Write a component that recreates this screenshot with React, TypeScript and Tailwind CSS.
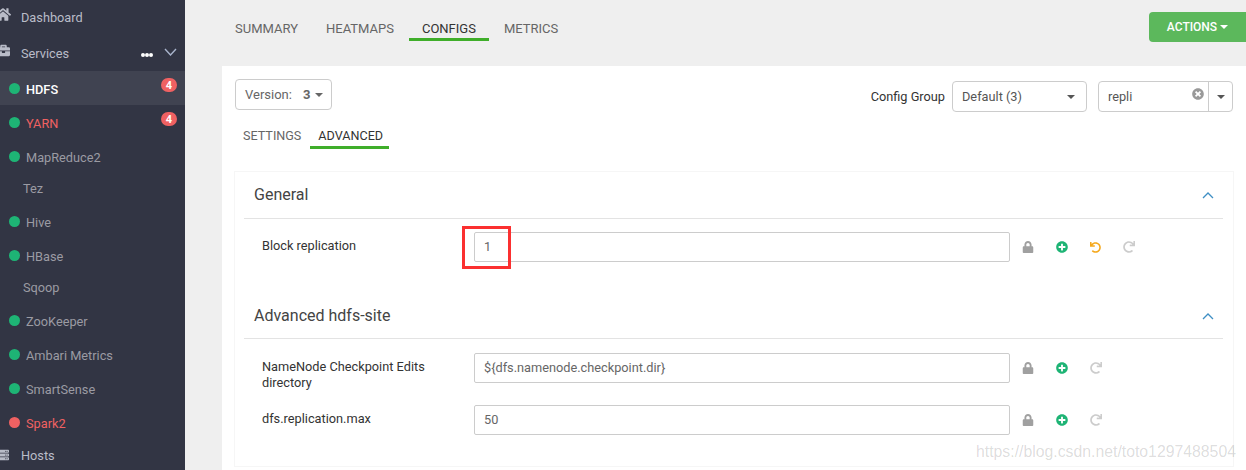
import { FaBriefcase, FaHome, FaLock, FaPlusCircle, FaRedo, FaServer, FaTimesCircle, FaUndo } from 'react-icons/fa';

interface Service {
    name: string;
    dot?: 'green' | 'red';
    tone?: 'active' | 'alert';
    badge?: number;
}

const services: Service[] = [
    { name: 'HDFS', dot: 'green', tone: 'active', badge: 4 },
    { name: 'YARN', dot: 'green', tone: 'alert', badge: 4 },
    { name: 'MapReduce2', dot: 'green' },
    { name: 'Tez' },
    { name: 'Hive', dot: 'green' },
    { name: 'HBase', dot: 'green' },
    { name: 'Sqoop' },
    { name: 'ZooKeeper', dot: 'green' },
    { name: 'Ambari Metrics', dot: 'green' },
    { name: 'SmartSense', dot: 'green' },
    { name: 'Spark2', dot: 'red', tone: 'alert' },
];

const Caret = ({ className }: { className: string }) => (
    <span className={`inline-block w-0 h-0 border-x-[4px] border-x-transparent border-t-[4px] ${className}`} />
);

const Chevron = ({ className }: { className?: string }) => (
    <svg className={className} width="12" height="7" viewBox="0 0 12 7" fill="none" stroke="#3f8fc4" strokeWidth="1.3">
        <path d="M1 6l5-5 5 5" />
    </svg>
);

const ServiceRow = ({ service }: { service: Service }) => {
    const color = service.tone === 'active' ? 'text-white font-medium' : service.tone === 'alert' ? 'text-[#ef6162]' : 'text-[#9b9ba3]';
    return (
        <div className={`relative flex items-center ${service.dot ? 'h-[34px] pl-[9px]' : 'h-[31px] pl-[23px]'} ${service.tone === 'active' ? 'bg-[#404351]' : ''}`}>
            {service.dot && (
                <span className={`w-[11px] h-[11px] rounded-full mr-[6px] ${service.dot === 'green' ? 'bg-[#1eb475]' : 'bg-[#ef6162]'}`} />
            )}
            <span className={`text-[12.75px] ${service.dot ? 'mt-[4px]' : ''} ${color}`}>{service.name}</span>
            {service.badge && (
                <span className="absolute left-[161px] top-[7px] w-[16px] h-[14px] rounded-full bg-[#ef6162] text-white text-[11px] font-bold leading-[15px] text-center">
                    {service.badge}
                </span>
            )}
        </div>
    );
};

const Sidebar = () => (
    <aside className="w-[185px] shrink-0 bg-[#323544] flex flex-col">
        <div className="h-[35px] flex items-center text-[#b9bcc8]">
            <FaHome className="w-[16px] h-[15px] -ml-[5px] -mt-[6px] shrink-0" />
            <span className="text-[12.75px] ml-[10px]">Dashboard</span>
        </div>
        <div className="h-[36px] flex items-center text-[#b9bcc8]">
            <FaBriefcase className="w-[15px] h-[13px] -ml-[4px] -mt-[5px] shrink-0" />
            <span className="text-[12.75px] ml-[10px] mt-[1px]">Services</span>
            <span className="flex ml-[72px] mt-[4px]">
                <span className="w-[4px] h-[4px] rounded-full bg-white" />
                <span className="w-[4px] h-[4px] rounded-full bg-white" />
                <span className="w-[4px] h-[4px] rounded-full bg-white" />
            </span>
            <svg className="ml-[11px] -mt-[3px]" width="13" height="8" viewBox="0 0 13 8" fill="none" stroke="#a9b4cc" strokeWidth="1.4">
                <path d="M1 1l5.5 6L12 1" />
            </svg>
        </div>
        {services.map((service) => (
            <ServiceRow key={service.name} service={service} />
        ))}
        <div className="h-[30px] flex items-center text-[#b9bcc8]">
            <FaServer className="w-[14px] h-[12px] -ml-[4px] mt-[1px] shrink-0" />
            <span className="text-[12.75px] ml-[11px] mt-[4px]">Hosts</span>
        </div>
    </aside>
);

const ConfigRow = ({ label, value, undo }: { label: string; value: string; undo?: boolean }) => (
    <div className="flex items-center h-[30px]">
        <div className="w-[239px] self-start pt-[6px] pl-[27px] pr-[40px] text-[12.75px] leading-[16px] text-[#333]">{label}</div>
        <div className="w-[536px] h-[30px] border border-[#ccc] rounded-[2px] pl-[9px] flex items-center text-[12.75px] text-[#666]">{value}</div>
        <FaLock className="w-[12px] h-[12px] ml-[12px] -mt-[1px] text-[#a0a0a0]" />
        <FaPlusCircle className="w-[12px] h-[12px] ml-[22px] text-[#1eb475]" />
        {undo && <FaUndo className="w-[11px] h-[11px] ml-[22px] text-[#f5a81c]" />}
        <FaRedo className="w-[12px] h-[12px] ml-[22px] text-[#ccc]" />
    </div>
);

const SectionHeader = ({ title, titleClass, chevronClass }: { title: string; titleClass?: string; chevronClass?: string }) => (
    <div className="h-[47px] ml-[9px] mr-[10px] pl-[10px] pr-[9px] border-b border-[#e3e3e3] flex items-center justify-between">
        <h2 className={`text-[16px] text-[#444] ${titleClass ?? ''}`}>{title}</h2>
        <Chevron className={chevronClass} />
    </div>
);

const App = () => (
    <div className="relative w-[1246px] h-[470px] overflow-hidden flex bg-[#efefef] font-['Roboto',sans-serif]">
        <Sidebar />
        <main className="flex-1 min-w-0 flex flex-col pl-[37px]">
            <div className="h-[66px] shrink-0 flex items-start">
                <nav className="flex pt-[21px] text-[13px] text-[#666] leading-[16px]">
                    <span className="ml-[13px]">SUMMARY</span>
                    <span className="ml-[28px]">HEATMAPS</span>
                    <span className="ml-[15px] px-[13px] pb-[1px] border-b-[3px] border-[#3fae2a] text-[#333]">CONFIGS</span>
                    <span className="ml-[15px]">METRICS</span>
                </nav>
                <button className="ml-auto mt-[12px] w-[97px] h-[30px] bg-[#5cb85c] rounded-l-[4px] text-white text-[12px] font-medium flex items-center justify-center gap-[3px]">
                    ACTIONS <Caret className="border-t-white" />
                </button>
            </div>
            <section className="flex-1 min-h-0 bg-white pl-[13px] pr-[12px] flex flex-col">
                <div className="flex items-start pt-[13px]">
                    <button className="w-[97px] h-[31px] border border-[#ccc] rounded-[4px] flex items-center pl-[9px] text-[13px] text-[#666]">
                        Version:<b className="ml-[11px] font-bold">3</b><Caret className="ml-[5px] border-t-[#666]" />
                    </button>
                    <span className="ml-auto mt-[8px] text-[12.75px] text-[#333]">Config Group</span>
                    <div className="ml-[7px] mt-[2px] w-[135px] h-[31px] border border-[#ccc] rounded-[4px] flex items-center justify-between pl-[9px] pr-[11px] text-[12.75px] text-[#555]">
                        Default (3)<Caret className="border-t-[#555]" />
                    </div>
                    <div className="ml-[11px] mr-[1px] mt-[2px] w-[135px] h-[31px] border border-[#ccc] rounded-[4px] flex text-[12.75px] text-[#555]">
                        <div className="relative flex-1 flex items-center pl-[9px] border-r border-[#ccc]">
                            repli
                            <FaTimesCircle className="absolute right-[4px] top-[6px] w-[12px] h-[12px] text-[#999]" />
                        </div>
                        <div className="w-[23px] flex items-center justify-center"><Caret className="border-t-[#555]" /></div>
                    </div>
                </div>
                <div className="flex text-[12.6px] leading-[16px] mt-[16px] ml-[8px]">
                    <span className="text-[#666]">SETTINGS</span>
                    <span className="ml-[9px] pl-[8px] pr-[6px] pb-[2px] border-b-[3px] border-[#3fae2a] text-[#333]">ADVANCED</span>
                </div>
                <div className="mt-[22px] mb-[3px] -ml-[1px] flex-1 border border-[#f6f6f6]">
                    <SectionHeader title="General" />
                    <div className="mt-[13px] relative">
                        <ConfigRow label="Block replication" value="1" undo />
                        <div className="absolute left-[227px] -top-[6px] w-[49px] h-[43px] border-[3px] border-[#fb3030]" />
                    </div>
                    <div className="h-[30px]" />
                    <SectionHeader title="Advanced hdfs-site" titleClass="mt-[2px]" chevronClass="mt-[3px]" />
                    <div className="mt-[14px]">
                        <ConfigRow label="NameNode Checkpoint Edits directory" value="${dfs.namenode.checkpoint.dir}" />
                    </div>
                    <div className="mt-[22px]">
                        <ConfigRow label="dfs.replication.max" value="50" />
                    </div>
                </div>
            </section>
        </main>
        <span className="absolute left-[976px] top-[443px] text-[15.8px] leading-[18px] text-black/15 font-['Liberation_Sans',sans-serif]">
            https://blog.csdn.net/toto1297488504
        </span>
    </div>
);

export default App;
